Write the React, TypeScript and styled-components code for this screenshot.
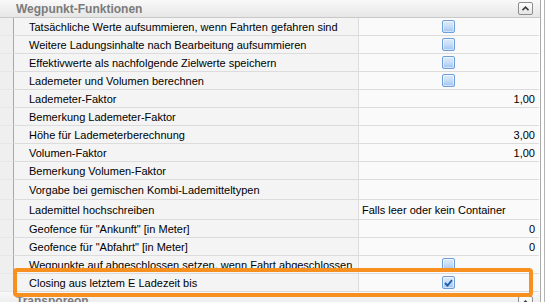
import React from "react";
import styled, { createGlobalStyle } from "styled-components";

const GlobalStyle = createGlobalStyle`
  html, body {
    margin: 0;
    padding: 0;
    background: #ffffff;
  }
  body {
    font-family: "Liberation Sans", Arial, sans-serif;
    font-size: 11px;
    color: #000;
  }
`;

const Frame = styled.div`
  position: relative;
  width: 546px;
  height: 302px;
  overflow: hidden;
  display: flex;
`;

const Panel = styled.div`
  width: 540px;
  display: flex;
  flex-direction: column;
  border-right: 1px solid #a9a9a9;
`;

const Edge = styled.div`
  box-sizing: border-box;
  width: 4px;
  border-left: 1px solid #ffffff;
  border-right: 1px solid #b4b4b4;
`;

const SectionHeader = styled.div`
  height: 17px;
  flex: 0 0 17px;
  border-bottom: 1px solid #c9c9c9;
  background: linear-gradient(#f9f9f9, #e6e6e6);
  display: flex;
  align-items: center;
  justify-content: space-between;
  padding: 0 7px 0 16px;
`;

const SectionTitle = styled.span`
  font-weight: bold;
  color: #7b7b7b;
  font-size: 12px;
`;

const ToggleButton = styled.div<{ $top?: boolean }>`
  width: 13px;
  height: 11px;
  border: 1px solid #8d8d8d;
  border-radius: 2px;
  background: linear-gradient(#ffffff, #e4e4e4);
  display: flex;
  align-items: center;
  justify-content: center;
  align-self: ${(p) => (p.$top ? "flex-start" : "center")};
  margin-top: ${(p) => (p.$top ? "4px" : "0")};
`;

const Grid = styled.div`
  display: flex;
  flex-direction: column;
`;

const Row = styled.div<{ $h?: number }>`
  display: grid;
  grid-template-columns: 14px 345px 180px;
  height: ${(p) => p.$h ?? 18}px;
`;

const Gutter = styled.div`
  background: #efefef;
  border-right: 1px solid #a8a8a8;
  border-bottom: 1px solid #e7e7e7;
`;

const Label = styled.div`
  background: #f4f4f4;
  border-right: 1px solid #dcdcdc;
  border-bottom: 1px solid #dcdcdc;
  padding-left: 15px;
  display: flex;
  align-items: center;
  white-space: nowrap;
  overflow: hidden;
`;

const Value = styled.div<{ $align?: "left" | "right" | "center" }>`
  background: #fafafa;
  border-bottom: 1px solid #dcdcdc;
  display: flex;
  align-items: center;
  justify-content: ${(p) =>
    p.$align === "right" ? "flex-end" : p.$align === "center" ? "center" : "flex-start"};
  padding: 0 4px 0 3px;
  white-space: nowrap;
  overflow: hidden;
`;

const CheckBox = styled.span`
  width: 13px;
  height: 13px;
  box-sizing: border-box;
  border: 1px solid #6e9fd9;
  border-radius: 2px;
  background: linear-gradient(#deebfb 0%, #c7ddf7 50%, #9ec3ee 100%);
  box-shadow: inset 0 0 0 1px rgba(255, 255, 255, 0.5);
  display: flex;
  align-items: center;
  justify-content: center;
`;

const Highlight = styled.div`
  position: absolute;
  left: 13px;
  top: 268px;
  width: 520px;
  height: 29px;
  box-sizing: border-box;
  border: 4px solid #f7901e;
  border-radius: 4px;
  pointer-events: none;
`;

type Item = {
  label: string;
  kind: "check" | "num" | "text" | "empty";
  value?: string;
  checked?: boolean;
  h?: number;
};

const items: Item[] = [
  { label: "Tatsächliche Werte aufsummieren, wenn Fahrten gefahren sind", kind: "check" },
  { label: "Weitere Ladungsinhalte nach Bearbeitung aufsummieren", kind: "check" },
  { label: "Effektivwerte als nachfolgende Zielwerte speichern", kind: "check" },
  { label: "Lademeter und Volumen berechnen", kind: "check" },
  { label: "Lademeter-Faktor", kind: "num", value: "1,00" },
  { label: "Bemerkung Lademeter-Faktor", kind: "empty" },
  { label: "Höhe für Lademeterberechnung", kind: "num", value: "3,00" },
  { label: "Volumen-Faktor", kind: "num", value: "1,00" },
  { label: "Bemerkung Volumen-Faktor", kind: "empty" },
  { label: "Vorgabe bei gemischen Kombi-Lademitteltypen", kind: "empty", h: 20 },
  { label: "Lademittel hochschreiben", kind: "text", value: "Falls leer oder kein Container", h: 20 },
  { label: 'Geofence für "Ankunft" [in Meter]', kind: "num", value: "0" },
  { label: 'Geofence für "Abfahrt" [in Meter]', kind: "num", value: "0" },
  { label: "Wegpunkte auf abgeschlossen setzen, wenn Fahrt abgeschlossen", kind: "check" },
  { label: "Closing aus letztem E Ladezeit bis", kind: "check", checked: true },
];

function Chevron() {
  return (
    <svg width="7" height="5" viewBox="0 0 7 5">
      <path d="M0.5 4.2 L3.5 1.2 L6.5 4.2" fill="none" stroke="#3c3c3c" strokeWidth="1.6" />
    </svg>
  );
}

function Check() {
  return (
    <svg width="9" height="8" viewBox="0 0 9 8">
      <path d="M1 4 L3.5 6.5 L8 1.2" fill="none" stroke="#1f5fb3" strokeWidth="1.9" />
    </svg>
  );
}

export default function App() {
  return (
    <Frame>
      <GlobalStyle />
      <Panel>
        <SectionHeader>
          <SectionTitle>Wegpunkt-Funktionen</SectionTitle>
          <ToggleButton>
            <Chevron />
          </ToggleButton>
        </SectionHeader>
        <Grid>
          {items.map((it) => (
            <Row key={it.label} $h={it.h}>
              <Gutter />
              <Label>{it.label}</Label>
              {it.kind === "check" ? (
                <Value $align="center">
                  <CheckBox>{it.checked && <Check />}</CheckBox>
                </Value>
              ) : it.kind === "num" ? (
                <Value $align="right">{it.value}</Value>
              ) : (
                <Value>{it.value}</Value>
              )}
            </Row>
          ))}
        </Grid>
        <SectionHeader>
          <SectionTitle>Transporeon</SectionTitle>
          <ToggleButton $top>
            <Chevron />
          </ToggleButton>
        </SectionHeader>
      </Panel>
      <Edge />
      <Highlight />
    </Frame>
  );
}
